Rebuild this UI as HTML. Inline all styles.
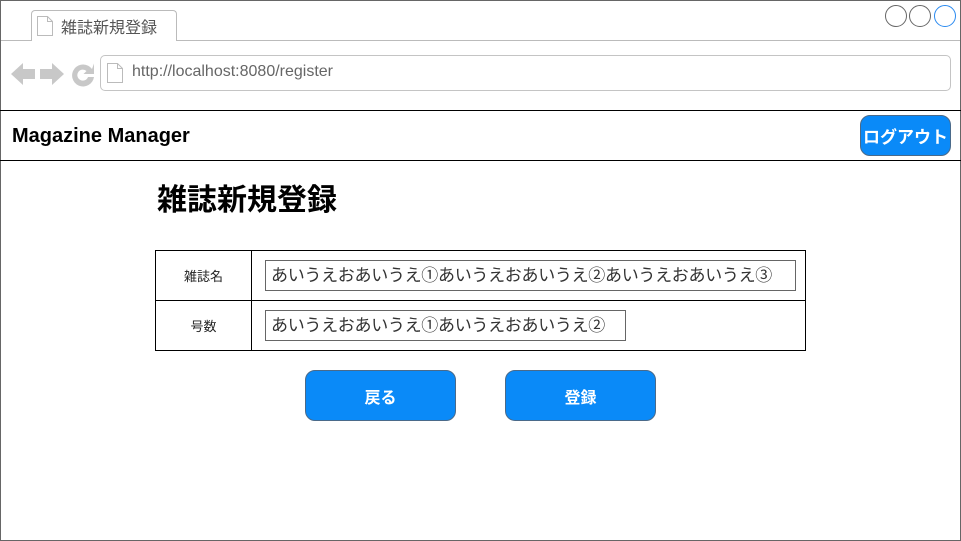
<!DOCTYPE html><html><head><meta charset="utf-8"><style>
body{margin:0;width:961px;height:541px;position:relative;overflow:hidden;background:#fff;font-family:"Liberation Sans","Noto Sans CJK JP",sans-serif}
div{position:absolute;box-sizing:border-box}
.c{width:22px;height:22px;border-radius:50%;border:1px solid #666;top:5px}
.btn{background:#0a8af8;border:1px solid #4a6a8a;border-radius:10px;color:#fff;font-weight:bold;display:flex;align-items:center;justify-content:center}
.inp{border:1px solid #666;font-size:17px;color:#333;padding-left:5px;line-height:30px;white-space:nowrap;overflow:hidden;letter-spacing:-0.3px}
.lab{font-size:13px;color:#222;display:flex;align-items:center;justify-content:center}
</style></head><body>
<div style="left:0;top:0;width:961px;height:541px;border:1px solid #666"></div>
<div style="left:31px;top:10px;width:146px;height:31px;border:1px solid #bbb;border-bottom:none;border-radius:4px 4px 0 0;background:#fff"></div>
<div style="left:1px;top:40px;width:30px;height:1px;background:#bbb"></div>
<div style="left:176px;top:40px;width:784px;height:1px;background:#bbb"></div>
<svg style="position:absolute;left:36px;top:15px" width="18" height="22"><path d="M1.5 1.5h10l5 5v14h-15z M11.5 1.5v5h5" fill="#fff" stroke="#bbb"/></svg>
<div style="left:61px;top:14px;font-size:16px;color:#555">雑誌新規登録</div>
<div class="c" style="left:885px"></div><div class="c" style="left:909px"></div><div class="c" style="left:934px;border-color:#2a8af0"></div>
<svg style="position:absolute;left:0;top:60px" width="100" height="28"><path d="M11 14l12-11v6h12v10h-12v6z" fill="#c8c8c8"/><path d="M64 14l-12-11v6h-12v10h12v6z" fill="#c8c8c8"/><path d="M92 9a11 11 0 1 0 2 8h-6a5.5 5.5 0 1 1-1.5-6l-3 3h10.5v-10.5z" fill="#c8c8c8"/></svg>
<div style="left:100px;top:55px;width:851px;height:36px;border:1px solid #c4c4c4;border-radius:5px"></div>
<svg style="position:absolute;left:106px;top:62px" width="18" height="22"><path d="M1.5 1.5h10l5 5v14h-15z M11.5 1.5v5h5" fill="#fff" stroke="#bbb"/></svg>
<div style="left:132px;top:63px;font-size:16px;color:#666">http://localhost:8080/register</div>
<div style="left:0;top:110px;width:961px;height:1px;background:#000"></div>
<div style="left:0;top:160px;width:961px;height:1px;background:#000"></div>
<div style="left:12px;top:125px;font-size:20px;font-weight:bold;color:#000">Magazine Manager</div>
<div class="btn" style="left:860px;top:115px;width:91px;height:41px;font-size:17px">ログアウト</div>
<div style="left:157px;top:182px;font-size:30px;font-weight:bold;color:#000;line-height:38px">雑誌新規登録</div>
<div style="left:155px;top:250px;width:651px;height:101px;border:1px solid #000"></div>
<div style="left:155px;top:300px;width:651px;height:1px;background:#000"></div>
<div style="left:251px;top:250px;width:1px;height:101px;background:#000"></div>
<div class="lab" style="left:156px;top:251px;width:95px;height:49px">雑誌名</div>
<div class="lab" style="left:156px;top:301px;width:95px;height:49px">号数</div>
<div class="inp" style="left:265px;top:260px;width:531px;height:31px">あいうえおあいうえ①あいうえおあいうえ②あいうえおあいうえ③</div>
<div class="inp" style="left:265px;top:310px;width:361px;height:31px">あいうえおあいうえ①あいうえおあいうえ②</div>
<div class="btn" style="left:305px;top:370px;width:151px;height:51px;font-size:16px">戻る</div>
<div class="btn" style="left:505px;top:370px;width:151px;height:51px;font-size:16px">登録</div>
</body></html>
